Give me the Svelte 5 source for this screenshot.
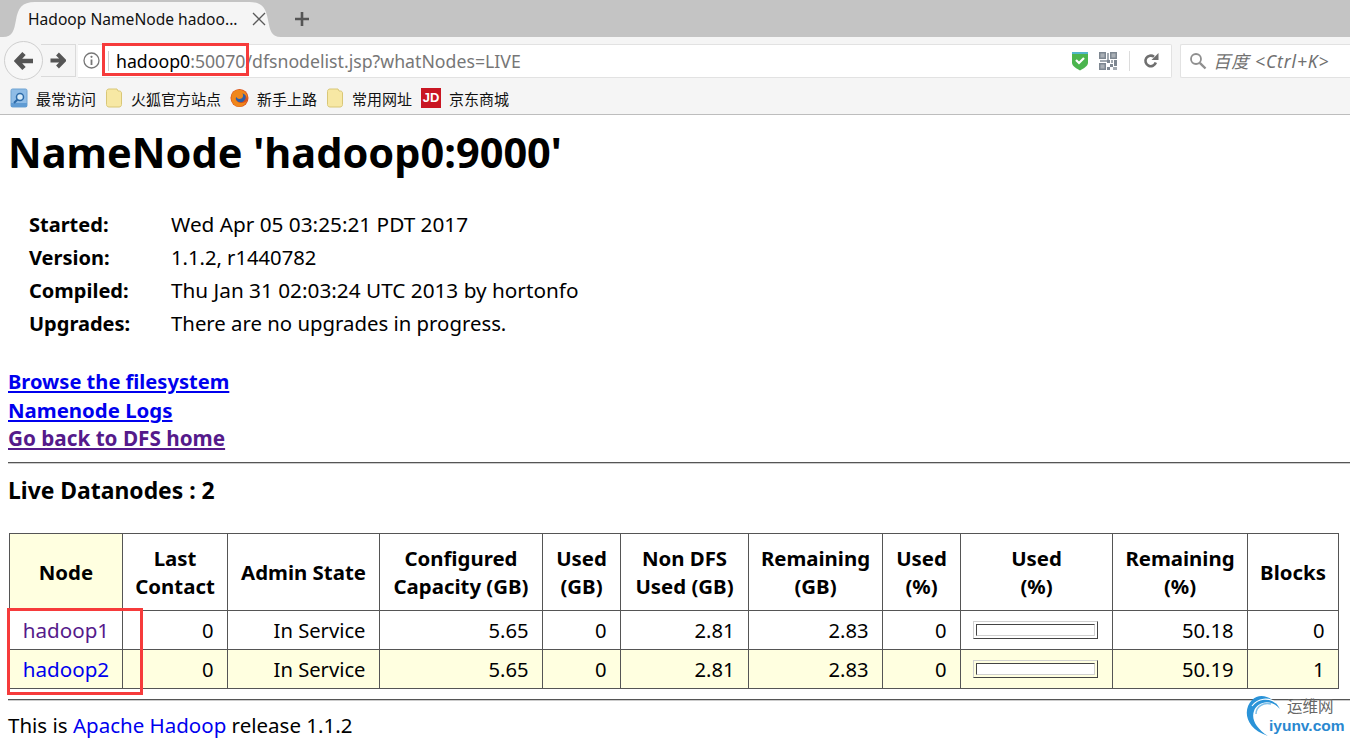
<script>
  const meta = [
    ['Started:', 'Wed Apr 05 03:25:21 PDT 2017'],
    ['Version:', '1.1.2, r1440782'],
    ['Compiled:', 'Thu Jan 31 02:03:24 UTC 2013 by hortonfo'],
    ['Upgrades:', 'There are no upgrades in progress.']
  ];
  const rows = [
    { node: 'hadoop1', visited: true, rem: '50.18', blocks: '0' },
    { node: 'hadoop2', visited: false, rem: '50.19', blocks: '1' }
  ];
  const qrCells = [
    [0,0,7,7],[11,0,7,7],[0,11,7,7]
  ];
</script>

<div class="browser">
  <div class="tabstrip">
    <div class="tab">
      <svg class="tabshape" viewBox="0 0 278 37" preserveAspectRatio="none"><path d="M0 37C10 37 11 30 13 20C15 8 19 2 32 2H246C259 2 263 8 265 20C267 30 268 37 278 37Z" fill="#f5f5f5"/></svg>
      <span class="tabtitle">Hadoop NameNode hadoo...</span>
      <svg class="tabclose" width="14" height="14" viewBox="0 0 14 14"><path d="M1 1L13 13M13 1L1 13" stroke="#5a5a5a" stroke-width="1.3"/></svg>
    </div>
    <svg class="newtab" width="16" height="16" viewBox="0 0 16 16"><path d="M8 1V15M1 8H15" stroke="#555" stroke-width="2.6"/></svg>
  </div>

  <div class="navbar">
    <div class="navgroup">
      <div class="back">
        <svg width="20" height="20" viewBox="0 0 20 20"><path d="M10 2.500L3 10L10 17.500M4 10H19" fill="none" stroke="#555" stroke-width="4.600"/></svg>
      </div>
      <div class="forward">
        <svg width="16" height="17" viewBox="0 0 16 17"><path d="M7.500 2L14 8.500L7.500 15M13 8.500H0.500" fill="none" stroke="#555" stroke-width="4"/></svg>
      </div>
    </div>
    <div class="urlbar">
      <svg class="info" width="17" height="17" viewBox="0 0 17 17"><circle cx="8.500" cy="8.500" r="7.500" fill="none" stroke="#777" stroke-width="1.300"/><path d="M8.500 7.500V13" stroke="#777" stroke-width="1.800"/><circle cx="8.500" cy="4.800" r="1.100" fill="#777"/></svg>
      <span class="urlsep"></span>
      <span class="url"><b>hadoop0</b>:50070/dfsnodelist.jsp?whatNodes=LIVE</span>
      <span class="urlicons">
        <svg width="18" height="20" viewBox="0 0 18 20"><path d="M1 1H17V12C17 15 12 18 9 19.500C6 18 1 15 1 12Z" fill="#4bb54e"/><path d="M1 1H17V3H1Z" fill="#52b5c9"/><path d="M5 9L8 12L13 7" fill="none" stroke="#fff" stroke-width="2.200"/></svg>
        <svg width="18" height="18" viewBox="0 0 18 18">
          {#each qrCells as c}
            <rect x={c[0]+.75} y={c[1]+.75} width={c[2]-1.500} height={c[3]-1.500} fill="#aab0b6" stroke="#7e8791" stroke-width="1.500"/>
          {/each}
          <rect x="8" y="1" width="2" height="7" fill="#a3aab1"/><rect x="1" y="8" width="7" height="2" fill="#a3aab1"/><rect x="8" y="8" width="3" height="3" fill="#7e8791"/><rect x="12" y="8" width="2" height="3" fill="#a3aab1"/><rect x="15" y="8" width="3" height="6" fill="#7e8791"/><rect x="11" y="12" width="3" height="3" fill="#7e8791"/><rect x="8" y="15" width="3" height="3" fill="#7e8791"/><rect x="14" y="15" width="4" height="3" fill="#a3aab1"/>
        </svg>
        <span class="iconsep"></span>
        <svg width="16" height="16" viewBox="0 0 16 16"><path d="M12.800 9.500A5.300 5.300 0 1 1 11 3.700" fill="none" stroke="#6f6f6f" stroke-width="2.600"/><path d="M8.500 7H15.500V0Z" fill="#6f6f6f"/></svg>
      </span>
    </div>
    <div class="searchbar">
      <svg width="18" height="18" viewBox="0 0 18 18"><circle cx="7" cy="7" r="5" fill="none" stroke="#8f8f8f" stroke-width="1.800"/><path d="M10.800 10.800L16.500 16.500" stroke="#8f8f8f" stroke-width="2.400"/></svg>
      <span class="searchtext">百度 &lt;Ctrl+K&gt;</span>
    </div>
  </div>

  <div class="bookmarks">
    <span class="bm"><svg width="18" height="20" viewBox="0 0 18 20"><rect x="1" y="1" width="16" height="18" rx="1.500" fill="#8fbce6" stroke="#6ea3d2"/><rect x="1" y="15" width="16" height="4" fill="#5f9bd3"/><circle cx="10" cy="9" r="3.500" fill="#d8ecfa" stroke="#2c6aa8" stroke-width="1.500"/><path d="M7.500 11.500L4 15" stroke="#2c6aa8" stroke-width="2"/></svg>最常访问</span>
    <span class="bm"><svg width="18" height="20" viewBox="0 0 18 20"><path d="M1.500 3.500C1.500 2 2.500 1 4 1H12L13 3H14.500C15.700 3 16.500 4 16.500 5V16.500C16.500 18 15.500 19 14 19H4C2.500 19 1.500 18 1.500 16.500Z" fill="#f7e8a4" stroke="#d9c777"/></svg>火狐官方站点</span>
    <span class="bm"><svg width="19" height="20" viewBox="0 0 20 20"><circle cx="10" cy="10" r="9.500" fill="#d9501e"/><circle cx="11" cy="9" r="5.500" fill="#2d5fa8"/><path d="M2 6C4 1 11 0 15 3C18 5 19 9 18 12C18 8 16 6 13 5C15 8 13 11 10 11C8 11 7 10 7 9C5 10 6 14 10 15C14 16 17 14 18 12C17 17 12 20 8 19C3 18 0 12 2 6Z" fill="#f0871b"/></svg>新手上路</span>
    <span class="bm"><svg width="18" height="20" viewBox="0 0 18 20"><path d="M1.500 3.500C1.500 2 2.500 1 4 1H12L13 3H14.500C15.700 3 16.500 4 16.500 5V16.500C16.500 18 15.500 19 14 19H4C2.500 19 1.500 18 1.500 16.500Z" fill="#f7e8a4" stroke="#d9c777"/></svg>常用网址</span>
    <span class="bm"><span class="jd">JD</span>京东商城</span>
  </div>
</div>

<main class="page">
  <h1>NameNode 'hadoop0:9000'</h1>

  <div class="meta">
    {#each meta as m}
      <div class="metarow"><b>{m[0]}</b><span>{m[1]}</span></div>
    {/each}
  </div>

  <div class="links">
    <a href="#a">Browse the filesystem</a>
    <a href="#b">Namenode Logs</a>
    <a href="#c" class="visited">Go back to DFS home</a>
  </div>

  <hr class="hr1" />
  <h3>Live Datanodes : 2</h3>

  <table>
    <thead>
      <tr>
        <th class="nodehead">Node</th>
        <th>Last<br />Contact</th>
        <th>Admin State</th>
        <th>Configured<br />Capacity (GB)</th>
        <th>Used<br />(GB)</th>
        <th>Non DFS<br />Used (GB)</th>
        <th>Remaining<br />(GB)</th>
        <th>Used<br />(%)</th>
        <th>Used<br />(%)</th>
        <th>Remaining<br />(%)</th>
        <th>Blocks</th>
      </tr>
    </thead>
    <tbody>
      {#each rows as r}
        <tr>
          <td class="name"><a href="#n" class:visited={r.visited}>{r.node}</a></td>
          <td>0</td>
          <td>In Service</td>
          <td>5.65</td>
          <td>0</td>
          <td>2.81</td>
          <td>2.83</td>
          <td>0</td>
          <td class="barcell"><div class="barout"><div class="barin"></div></div></td>
          <td>{r.rem}</td>
          <td>{r.blocks}</td>
        </tr>
      {/each}
    </tbody>
  </table>

  <hr class="hr2" />
  <p class="foot">This is <a href="#h">Apache Hadoop</a> release 1.1.2</p>
</main>

<div class="redbox box1"></div>
<div class="redbox box2"></div>

<div class="mark">
  <svg width="50" height="46" viewBox="0 0 50 46"><path d="M34 14C28 2 14 -3 6 5C-3 14 -2 33 22 41C10 33 5 24 8 16C11 7 25 3 34 14Z" fill="#2a93d8"/><path d="M30 8C23 2 12 3 6 11" fill="none" stroke="#fff" stroke-width="1.200"/><path d="M10 19C10 12 17 7 25 9" fill="none" stroke="#7fbfe8" stroke-width="1.500"/></svg>
  <span class="markcn">运维网</span>
  <span class="markurl">iyunv.com</span>
</div>

<style>
  :global(body) {
    margin: 0;
    background: #fff;
    overflow: hidden;
    font-family: "Noto Sans", "Noto Sans CJK SC", sans-serif;
    color: #000;
  }
  .browser { background: #f5f5f5; border-bottom: 1px solid #bdbdbd; }
  .tabstrip {
    height: 37px;
    background: #c4c4c4;
    display: flex;
    align-items: flex-end;
    padding-left: 3px;
  }
  .tab {
    position: relative;
    width: 278px;
    height: 37px;
    display: flex;
    align-items: center;
    padding-left: 25px;
    box-sizing: border-box;
  }
  .tabshape { position: absolute; inset: 0; width: 100%; height: 100%; }
  .tabtitle { position: relative; font-size: 15.6px; color: #111; white-space: nowrap; }
  .tabclose { position: absolute; left: 249px; top: 12px; }
  .newtab { margin: 0 0 10px 13px; }

  .navbar {
    height: 47px;
    display: flex;
    align-items: center;
    padding-left: 4px;
    box-sizing: border-box;
    gap: 8px;
  }
  .navgroup { display: flex; align-items: center; width: 74px; flex: none; }
  .back {
    width: 39px; height: 39px; border-radius: 50%;
    border: 1px solid #cfcfcf; background: #f7f7f7;
    display: flex; align-items: center; justify-content: center;
    box-sizing: border-box; z-index: 1;
  }
  .forward {
    width: 35px; height: 33px; margin-left: -2px;
    border: 1px solid #dadada; border-left: 0;
    display: flex; align-items: center; justify-content: center;
    box-sizing: border-box;
  }
  .urlbar {
    margin-left: -8px;
    width: 1094px; height: 34px;
    background: #fff;
    border: 1px solid #e2e2e2; border-left: 0; border-radius: 0 2px 2px 0;
    display: flex; align-items: center;
    box-sizing: border-box;
    padding-left: 5px;
  }
  .info { flex: none; }
  .urlsep { width: 1px; height: 20px; background: #cfcfcf; margin: 0 7px 0 8px; flex: none; }
  .url { font-size: 17.7px; color: #777; white-space: nowrap; }
  .url b { font-weight: 400; color: #000; }
  .urlicons { margin-left: auto; display: flex; align-items: center; gap: 10px; padding-right: 12px; }
  .iconsep { width: 1px; height: 20px; background: #dcdcdc; margin: 0 3px 0 2px; }
  .searchbar {
    flex: 1;
    height: 34px;
    background: #fff;
    border: 1px solid #e2e2e2; border-right: 0; border-radius: 2px 0 0 2px;
    display: flex; align-items: center; gap: 6px;
    padding-left: 8px;
    box-sizing: border-box;
  }
  .searchtext { font-size: 17.5px; font-style: italic; color: #707070; white-space: nowrap; letter-spacing: 0.85px; }

  .bookmarks {
    height: 28px;
    padding-bottom: 2px;
    display: flex;
    align-items: center;
    padding-left: 10px;
    gap: 9px;
  }
  .bm { display: inline-flex; align-items: center; gap: 8px; font-size: 15px; color: #111; white-space: nowrap; }
  .jd {
    width: 20px; height: 20px; background: #c91623; color: #fff;
    font: 700 13px/20px "Liberation Sans", sans-serif; text-align: center;
  }

  .page { padding: 0 0 0 8px; }
  h1 { margin: 0; padding-top: 12px; font-size: 41.5px; line-height: 50px; font-weight: 700; }
  .meta { margin-top: 31px; padding-left: 21px; }
  .metarow { display: flex; font-size: 20.75px; line-height: 33px; }
  .metarow:nth-child(2) { font-size: 20.2px; }
  .metarow:nth-child(4) { font-size: 20.35px; }
  .metarow b { width: 142px; font-weight: 700; font-size: 20px; }
  .links { margin-top: 28px; display: flex; flex-direction: column; align-items: flex-start; }
  .links a { font-size: 20.4px; font-weight: 700; line-height: 28px; }
  .links a:nth-child(1) { font-size: 20.1px; }
  .links a:nth-child(3) { font-size: 20.7px; }
  a { color: #0000ee; text-decoration: none; }
  .links a { text-decoration: underline; }
  a.visited { color: #551a8b; }
  .hr1, .hr2 { margin: 0; border: 0; border-top: 1px solid #555; border-bottom: 1px solid #ccc; height: 0; }
  .hr1 { margin-top: 10px; }
  h3 { margin: 10px 0 0; font-size: 22.9px; line-height: 34px; font-weight: 700; }
  table {
    margin: 25px 0 0 1px;
    border-collapse: collapse;
    table-layout: fixed;
    width: 1330px;
    font-size: 20.2px;
  }
  th, td { border: 1px solid #555; padding: 0 13.5px 0 12px; box-sizing: border-box; }
  th { height: 77px; line-height: 28px; font-weight: 700; text-align: center; padding: 0; font-size: 20.4px; }
  td { height: 39px; line-height: 28px; text-align: right; }
  tbody tr:nth-child(2) { background: #ffffe0; }
  .nodehead { background: #ffffe0; }
  td.name { text-align: center; padding: 0; font-size: 20.6px; }
  th:nth-child(1) { width: 113px; }
  th:nth-child(2) { width: 105px; }
  th:nth-child(3) { width: 152px; }
  th:nth-child(4) { width: 163px; }
  th:nth-child(5) { width: 78px; }
  th:nth-child(6) { width: 128px; }
  th:nth-child(7) { width: 134px; }
  th:nth-child(8) { width: 78px; }
  th:nth-child(9) { width: 152px; }
  th:nth-child(10) { width: 135px; }
  th:nth-child(11) { width: 91px; }
  td.barcell { padding: 0 0 0 12px; }
  .barout {
    width: 125px; height: 18px;
    box-sizing: border-box;
    border: 1px solid; border-color: #d0d0d0 #444 #444 #d0d0d0;
    padding: 2px;
  }
  .barin {
    width: 119px; height: 12px; box-sizing: border-box;
    border: 1px solid; border-color: #444 #d0d0d0 #d0d0d0 #444;
    background: #fff;
  }
  .hr2 { margin-top: 10px; }
  .foot { margin: 10px 0 0; font-size: 20.5px; line-height: 28px; }

  .redbox { position: absolute; border: 3px solid #f63b3b; box-sizing: border-box; }
  .box1 { left: 102px; top: 43px; width: 147px; height: 33px; }
  .box2 { left: 7px; top: 608px; width: 136px; height: 87px; }

  .mark { position: absolute; left: 1246px; top: 695px; width: 104px; height: 47px; }
  .mark svg { position: absolute; left: 0; top: 0; }
  .markcn { position: absolute; left: 41px; top: 1px; font-size: 15.500px; line-height: 20px; color: #666; white-space: nowrap; }
  .markurl { position: absolute; left: 23px; top: 21px; font: 700 15.500px/20px "Liberation Sans", sans-serif; color: #2a88d0; white-space: nowrap; }
</style>
